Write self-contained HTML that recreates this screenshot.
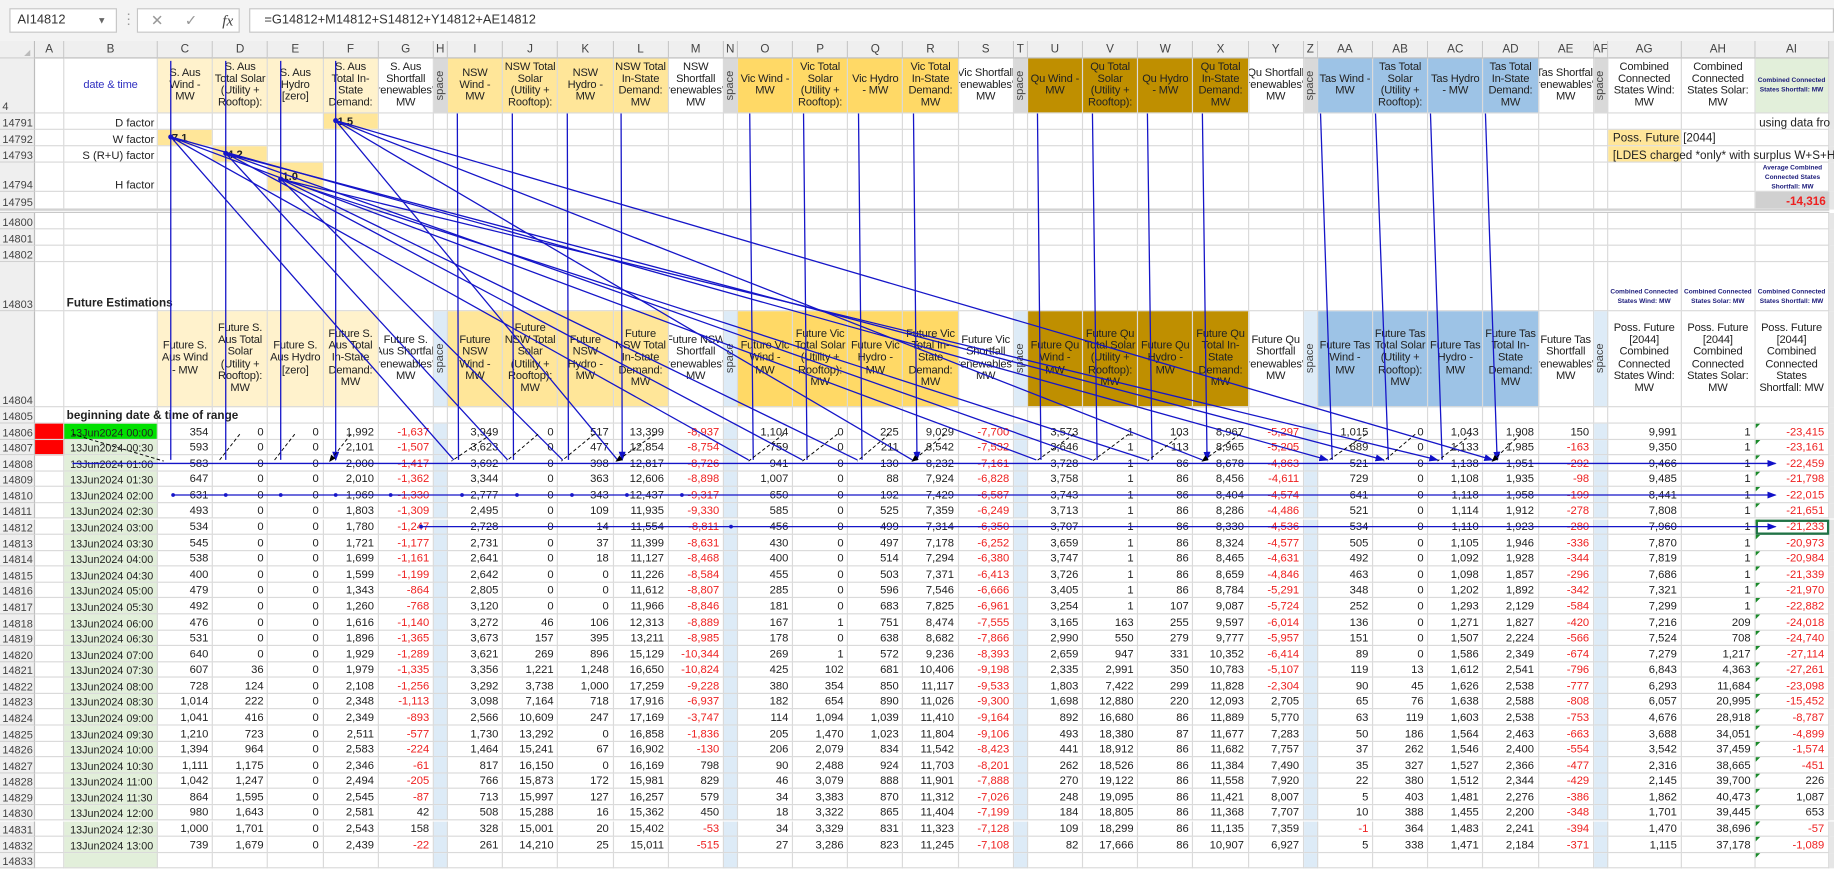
<!DOCTYPE html>
<html><head><meta charset="utf-8">
<style>
html,body{margin:0;padding:0;background:#fff;overflow:hidden;width:1834px;height:859px}
#w{position:absolute;left:0;top:0;width:1568px;height:735px;transform:scale(1.16964,1.1703);transform-origin:0 0;font-family:"Liberation Sans",sans-serif;font-size:9.6px;color:#222;background:#fff}
.top{position:absolute;left:0;top:0;width:1568px;height:35px;background:#f3f3f3}
.box{position:absolute;background:#fff;border:1px solid #c6c6c6;box-sizing:border-box;height:21px;top:7px;font-size:11px;line-height:19px;color:#333}
.r{position:absolute;left:0;width:1568px;display:grid;grid-template-columns:30px 25px 80px repeat(5,47.2px) 12px repeat(5,47.2px) 12px repeat(5,47.2px) 12px repeat(5,47.2px) 12px repeat(5,47.2px) 12px 63px 63px 63px 4px}
.r>*{border-right:1px solid #dadada;border-bottom:1px solid #dadada;box-sizing:border-box;overflow:hidden;white-space:nowrap;font-style:normal;font-weight:normal;display:flex;align-items:flex-end;position:relative;min-width:0}
.r>b{background:#efefef;color:#444;padding-left:2px;border-right:1px solid #bdbdbd;border-bottom:1px solid #d0d0d0;font-size:9.4px}
.r>*:last-child{background:#e6e6e6;border:none}
.ch>*{background:#efefef;justify-content:center;align-items:center;color:#444;font-size:10px;border-right:1px solid #c8c8c8;border-bottom:1px solid #bdbdbd}
.d>i{justify-content:flex-end;padding-right:3px}
.d>i:nth-child(3){background:#e2efda;justify-content:flex-start;padding-left:5px;font-size:9.2px}
.d>i:nth-child(9),.d>i:nth-child(15),.d>i:nth-child(21),.d>i:nth-child(27),.d>i:nth-child(33){background:#ddebf7}
.d>i:nth-child(36)::before{content:"";position:absolute;left:0;top:0;border-top:4px solid #1a8a2a;border-right:4px solid transparent}
.n{color:#ee2020}
.h>i{justify-content:center;align-items:center;text-align:center;white-space:normal;line-height:10.2px;font-size:9.5px;letter-spacing:-0.15px;padding:0 1px}
.y1{background:#fff2cc}.y2{background:#ffe699}.y3{background:#ffd966}.y4{background:#bf8f00}.bl{background:#9dc3e6}.gr{background:#d9d9d9}.lb{background:#ddebf7}.gn{background:#e2efda}
.sp span{transform:rotate(-90deg);display:block;white-space:nowrap;color:#444;letter-spacing:0}
.tiny{font-size:5.6px!important;line-height:8px!important;font-weight:bold!important;color:#1b1b7a;letter-spacing:0!important}
.ov{overflow:visible!important;z-index:2}
.ab{position:absolute;box-sizing:border-box;display:flex;align-items:flex-end;white-space:nowrap;z-index:3}
</style></head><body><div id="w">
<div class="top">
<div class="box" style="left:8px;width:92px;padding-left:6px">AI14812<span style="position:absolute;right:8px;top:0;font-size:8px;color:#666">▼</span></div>
<div style="position:absolute;left:104px;top:9px;color:#999;font-size:12px">⋮</div>
<div class="box" style="left:117px;width:88px;color:#999;font-size:13px"><span style="position:absolute;left:11px">✕</span><span style="position:absolute;left:40px">✓</span><span style="position:absolute;left:72px;font-family:'Liberation Serif',serif;font-style:italic;color:#444">fx</span></div>
<div class="box" style="left:213px;width:1355px;padding-left:12px">=G14812+M14812+S14812+Y14812+AE14812</div>
</div>

<div class="r ch" style="top:35px;height:15px"><b style="justify-content:flex-end;align-items:flex-end;padding-right:3px;color:#bbb;font-size:7px">◢</b><i>A</i><i>B</i><i>C</i><i>D</i><i>E</i><i>F</i><i>G</i><i>H</i><i>I</i><i>J</i><i>K</i><i>L</i><i>M</i><i>N</i><i>O</i><i>P</i><i>Q</i><i>R</i><i>S</i><i>T</i><i>U</i><i>V</i><i>W</i><i>X</i><i>Y</i><i>Z</i><i>AA</i><i>AB</i><i>AC</i><i>AD</i><i>AE</i><i>AF</i><i>AG</i><i>AH</i><i>AI</i><i></i></div>

<div class="r h" style="top:50px;height:47px"><b>4</b><i></i><i style="color:#3030c0">date &amp; time</i><i class=y1>S. Aus Wind - MW</i><i class=y1>S. Aus Total Solar (Utility + Rooftop):</i><i class=y1>S. Aus Hydro [zero]</i><i class=y1>S. Aus Total In-State Demand:</i><i>S. Aus Shortfall 'renewables': MW</i><i class="gr sp"><span>space</span></i><i class=y2>NSW Wind - MW</i><i class=y2>NSW Total Solar (Utility + Rooftop):</i><i class=y2>NSW Hydro - MW</i><i class=y2>NSW Total In-State Demand: MW</i><i>NSW Shortfall 'renewables': MW</i><i class="gr sp"><span>space</span></i><i class=y3>Vic Wind - MW</i><i class=y3>Vic Total Solar (Utility + Rooftop):</i><i class=y3>Vic Hydro - MW</i><i class=y3>Vic Total In-State Demand: MW</i><i>Vic Shortfall 'renewables': MW</i><i class="gr sp"><span>space</span></i><i class=y4>Qu Wind - MW</i><i class=y4>Qu Total Solar (Utility + Rooftop):</i><i class=y4>Qu Hydro - MW</i><i class=y4>Qu Total In-State Demand: MW</i><i>Qu Shortfall 'renewables': MW</i><i class="gr sp"><span>space</span></i><i class=bl>Tas Wind - MW</i><i class=bl>Tas Total Solar (Utility + Rooftop):</i><i class=bl>Tas Hydro - MW</i><i class=bl>Tas Total In-State Demand: MW</i><i>Tas Shortfall 'renewables': MW</i><i class="gr sp"><span>space</span></i><i>Combined Connected States Wind: MW</i><i>Combined Connected States Solar: MW</i><i class="gn tiny">Combined Connected States Shortfall: MW</i><i></i></div>

<div class="r" style="top:97px;height:14px"><b>14791</b><i></i><i></i><i></i><i></i><i></i><i></i><i></i><i></i><i></i><i></i><i></i><i></i><i></i><i></i><i></i><i></i><i></i><i></i><i></i><i></i><i></i><i></i><i></i><i></i><i></i><i></i><i></i><i></i><i></i><i></i><i></i><i></i><i></i><i></i><i></i><i></i></div>
<div class="r" style="top:111px;height:14px"><b>14792</b><i></i><i></i><i></i><i></i><i></i><i></i><i></i><i></i><i></i><i></i><i></i><i></i><i></i><i></i><i></i><i></i><i></i><i></i><i></i><i></i><i></i><i></i><i></i><i></i><i></i><i></i><i></i><i></i><i></i><i></i><i></i><i></i><i></i><i></i><i></i><i></i></div>
<div class="r" style="top:125px;height:14px"><b>14793</b><i></i><i></i><i></i><i></i><i></i><i></i><i></i><i></i><i></i><i></i><i></i><i></i><i></i><i></i><i></i><i></i><i></i><i></i><i></i><i></i><i></i><i></i><i></i><i></i><i></i><i></i><i></i><i></i><i></i><i></i><i></i><i></i><i></i><i></i><i></i><i></i></div>
<div class="r" style="top:139px;height:25px"><b>14794</b><i></i><i></i><i></i><i></i><i></i><i></i><i></i><i></i><i></i><i></i><i></i><i></i><i></i><i></i><i></i><i></i><i></i><i></i><i></i><i></i><i></i><i></i><i></i><i></i><i></i><i></i><i></i><i></i><i></i><i></i><i></i><i></i><i></i><i></i><i></i><i></i></div>
<div class="r" style="top:164px;height:15px"><b>14795</b><i></i><i></i><i></i><i></i><i></i><i></i><i></i><i></i><i></i><i></i><i></i><i></i><i></i><i></i><i></i><i></i><i></i><i></i><i></i><i></i><i></i><i></i><i></i><i></i><i></i><i></i><i></i><i></i><i></i><i></i><i></i><i></i><i></i><i></i><i></i><i></i></div>

<!-- overlays for rows 14791-14795 -->
<div class="ab" style="left:55px;top:97px;width:80px;height:14px;justify-content:flex-end;padding-right:3px">D factor</div>
<div class="ab" style="left:55px;top:111px;width:80px;height:14px;justify-content:flex-end;padding-right:3px">W factor</div>
<div class="ab" style="left:55px;top:125px;width:80px;height:14px;justify-content:flex-end;padding-right:3px">S (R+U) factor</div>
<div class="ab" style="left:55px;top:139px;width:80px;height:25px;justify-content:flex-end;padding-right:3px">H factor</div>
<div class="ab y2" style="left:276.6px;top:97px;width:46.2px;height:13px;font-weight:bold;padding-left:12px;z-index:1">1.5</div>
<div class="ab y2" style="left:135px;top:111px;width:46.2px;height:13px;font-weight:bold;padding-left:12px;z-index:1">7.1</div>
<div class="ab y2" style="left:182.2px;top:125px;width:46.2px;height:13px;font-weight:bold;padding-left:12px;z-index:1">4.2</div>
<div class="ab y2" style="left:229.4px;top:139px;width:46.2px;height:24px;font-weight:bold;padding-left:12px;align-items:center;z-index:1">1.0</div>
<div class="ab" style="left:1501px;top:97px;height:14px;padding-left:3px;font-size:10px">using data fro</div>
<div class="ab y2" style="left:1375px;top:111px;width:62px;height:13px;padding-left:4px;font-size:10px;overflow:visible"><span style="background:transparent">Poss. Future</span><span style="position:absolute;left:62px;bottom:0;padding-left:2px;white-space:nowrap">[2044]</span></div>
<div class="ab" style="left:1375px;top:125px;width:62px;height:13px;background:#ffe699;z-index:1"></div>
<div class="ab" style="left:1375px;top:125px;height:14px;padding-left:4px;font-size:10px;z-index:4">[LDES charged *only* with surplus W+S+H</div>
<div class="ab tiny" style="left:1501px;top:139px;width:63px;height:25px;justify-content:center;text-align:center;white-space:normal;align-items:center">Average Combined Connected States Shortfall: MW</div>
<div class="ab" style="left:1501px;top:164px;width:63px;height:14px;background:#d0d0d0;color:#ee2020;font-weight:bold;justify-content:flex-end;padding-right:3px;font-size:10px">-14,316</div>

<div style="position:absolute;left:0;top:179px;width:1564px;height:3px;border-top:1px solid #c8c8c8;border-bottom:1px solid #c8c8c8;box-sizing:border-box"></div>
<div class="r" style="top:182px;height:14px"><b>14800</b><i></i><i></i><i></i><i></i><i></i><i></i><i></i><i></i><i></i><i></i><i></i><i></i><i></i><i></i><i></i><i></i><i></i><i></i><i></i><i></i><i></i><i></i><i></i><i></i><i></i><i></i><i></i><i></i><i></i><i></i><i></i><i></i><i></i><i></i><i></i><i></i></div>
<div class="r" style="top:196px;height:14px"><b>14801</b><i></i><i></i><i></i><i></i><i></i><i></i><i></i><i></i><i></i><i></i><i></i><i></i><i></i><i></i><i></i><i></i><i></i><i></i><i></i><i></i><i></i><i></i><i></i><i></i><i></i><i></i><i></i><i></i><i></i><i></i><i></i><i></i><i></i><i></i><i></i><i></i></div>
<div class="r" style="top:210px;height:14px"><b>14802</b><i></i><i></i><i></i><i></i><i></i><i></i><i></i><i></i><i></i><i></i><i></i><i></i><i></i><i></i><i></i><i></i><i></i><i></i><i></i><i></i><i></i><i></i><i></i><i></i><i></i><i></i><i></i><i></i><i></i><i></i><i></i><i></i><i></i><i></i><i></i><i></i></div>
<div class="r" style="top:224px;height:42px"><b>14803</b><i></i><i class=ov style="font-weight:bold;padding-left:2px;font-size:10px">Future Estimations</i><i></i><i></i><i></i><i></i><i></i><i></i><i></i><i></i><i></i><i></i><i></i><i></i><i></i><i></i><i></i><i></i><i></i><i></i><i></i><i></i><i></i><i></i><i></i><i></i><i></i><i></i><i></i><i></i><i></i><i></i><i class=tiny style="justify-content:center;text-align:center;white-space:normal;padding-bottom:3px">Combined Connected States Wind: MW</i><i class=tiny style="justify-content:center;text-align:center;white-space:normal;padding-bottom:3px">Combined Connected States Solar: MW</i><i class=tiny style="justify-content:center;text-align:center;white-space:normal;padding-bottom:3px">Combined Connected States Shortfall: MW</i><i></i></div>

<div class="r h" style="top:266px;height:82px"><b>14804</b><i></i><i></i><i class=y1>Future S. Aus Wind - MW</i><i class=y1>Future S. Aus Total Solar (Utility + Rooftop): MW</i><i class=y1>Future S. Aus Hydro [zero]</i><i class=y1>Future S. Aus Total In-State Demand: MW</i><i>Future S. Aus Shortfall 'renewables': MW</i><i class="lb sp"><span>space</span></i><i class=y2>Future NSW Wind - MW</i><i class=y2>Future NSW Total Solar (Utility + Rooftop): MW</i><i class=y2>Future NSW Hydro - MW</i><i class=y2>Future NSW Total In-State Demand: MW</i><i>Future NSW Shortfall 'renewables': MW</i><i class="lb sp"><span>space</span></i><i class=y3>Future Vic Wind - MW</i><i class=y3>Future Vic Total Solar (Utility + Rooftop): MW</i><i class=y3>Future Vic Hydro - MW</i><i class=y3>Future Vic Total In-State Demand: MW</i><i>Future Vic Shortfall 'renewables': MW</i><i class="lb sp"><span>space</span></i><i class=y4>Future Qu Wind - MW</i><i class=y4>Future Qu Total Solar (Utility + Rooftop): MW</i><i class=y4>Future Qu Hydro - MW</i><i class=y4>Future Qu Total In-State Demand: MW</i><i>Future Qu Shortfall 'renewables': MW</i><i class="lb sp"><span>space</span></i><i class=bl>Future Tas Wind - MW</i><i class=bl>Future Tas Total Solar (Utility + Rooftop): MW</i><i class=bl>Future Tas Hydro - MW</i><i class=bl>Future Tas Total In-State Demand: MW</i><i>Future Tas Shortfall 'renewables': MW</i><i class="lb sp"><span>space</span></i><i>Poss. Future [2044] Combined Connected States Wind: MW</i><i>Poss. Future [2044] Combined Connected States Solar: MW</i><i>Poss. Future [2044] Combined Connected States Shortfall: MW</i><i></i></div>
<div class="r" style="top:348px;height:14px"><b>14805</b><i></i><i class=ov style="font-weight:bold;padding-left:2px;font-size:10px">beginning date &amp; time of range</i><i></i><i></i><i></i><i></i><i></i><i></i><i></i><i></i><i></i><i></i><i></i><i></i><i></i><i></i><i></i><i></i><i></i><i></i><i></i><i></i><i></i><i></i><i></i><i></i><i></i><i></i><i></i><i></i><i></i><i></i><i></i><i></i><i></i><i></i></div>

<div class="r d" style="top:362px;height:13.6px"><b>14806</b><i style="background:#f00"></i><i style="background:#00e000">13Jun2024 00:00</i><i>354</i><i>0</i><i>0</i><i>1,992</i><i class=n>-1,637</i><i></i><i>3,949</i><i>0</i><i>517</i><i>13,399</i><i class=n>-8,937</i><i></i><i>1,104</i><i>0</i><i>225</i><i>9,029</i><i class=n>-7,700</i><i></i><i>3,573</i><i>1</i><i>103</i><i>8,967</i><i class=n>-5,297</i><i></i><i>1,015</i><i>0</i><i>1,043</i><i>1,908</i><i>150</i><i></i><i>9,991</i><i>1</i><i class=n>-23,415</i><i></i></div>
<div class="r d" style="top:375.6px;height:13.6px"><b>14807</b><i style="background:#f00"></i><i>13Jun2024 00:30</i><i>593</i><i>0</i><i>0</i><i>2,101</i><i class=n>-1,507</i><i></i><i>3,623</i><i>0</i><i>477</i><i>12,854</i><i class=n>-8,754</i><i></i><i>759</i><i>0</i><i>211</i><i>8,542</i><i class=n>-7,532</i><i></i><i>3,646</i><i>1</i><i>113</i><i>8,965</i><i class=n>-5,205</i><i></i><i>689</i><i>0</i><i>1,133</i><i>1,985</i><i class=n>-163</i><i></i><i>9,350</i><i>1</i><i class=n>-23,161</i><i></i></div>
<div class="r d" style="top:389.2px;height:13.6px"><b>14808</b><i></i><i>13Jun2024 01:00</i><i>583</i><i>0</i><i>0</i><i>2,000</i><i class=n>-1,417</i><i></i><i>3,692</i><i>0</i><i>398</i><i>12,817</i><i class=n>-8,726</i><i></i><i>941</i><i>0</i><i>130</i><i>8,232</i><i class=n>-7,161</i><i></i><i>3,728</i><i>1</i><i>86</i><i>8,678</i><i class=n>-4,863</i><i></i><i>521</i><i>0</i><i>1,138</i><i>1,951</i><i class=n>-292</i><i></i><i>9,466</i><i>1</i><i class=n>-22,459</i><i></i></div>
<div class="r d" style="top:402.7px;height:13.6px"><b>14809</b><i></i><i>13Jun2024 01:30</i><i>647</i><i>0</i><i>0</i><i>2,010</i><i class=n>-1,362</i><i></i><i>3,344</i><i>0</i><i>363</i><i>12,606</i><i class=n>-8,898</i><i></i><i>1,007</i><i>0</i><i>88</i><i>7,924</i><i class=n>-6,828</i><i></i><i>3,758</i><i>1</i><i>86</i><i>8,456</i><i class=n>-4,611</i><i></i><i>729</i><i>0</i><i>1,108</i><i>1,935</i><i class=n>-98</i><i></i><i>9,485</i><i>1</i><i class=n>-21,798</i><i></i></div>
<div class="r d" style="top:416.3px;height:13.6px"><b>14810</b><i></i><i>13Jun2024 02:00</i><i>631</i><i>0</i><i>0</i><i>1,969</i><i class=n>-1,330</i><i></i><i>2,777</i><i>0</i><i>343</i><i>12,437</i><i class=n>-9,317</i><i></i><i>650</i><i>0</i><i>192</i><i>7,429</i><i class=n>-6,587</i><i></i><i>3,743</i><i>1</i><i>86</i><i>8,404</i><i class=n>-4,574</i><i></i><i>641</i><i>0</i><i>1,118</i><i>1,958</i><i class=n>-199</i><i></i><i>8,441</i><i>1</i><i class=n>-22,015</i><i></i></div>
<div class="r d" style="top:429.9px;height:13.6px"><b>14811</b><i></i><i>13Jun2024 02:30</i><i>493</i><i>0</i><i>0</i><i>1,803</i><i class=n>-1,309</i><i></i><i>2,495</i><i>0</i><i>109</i><i>11,935</i><i class=n>-9,330</i><i></i><i>585</i><i>0</i><i>525</i><i>7,359</i><i class=n>-6,249</i><i></i><i>3,713</i><i>1</i><i>86</i><i>8,286</i><i class=n>-4,486</i><i></i><i>521</i><i>0</i><i>1,114</i><i>1,912</i><i class=n>-278</i><i></i><i>7,808</i><i>1</i><i class=n>-21,651</i><i></i></div>
<div class="r d" style="top:443.5px;height:13.6px"><b>14812</b><i></i><i>13Jun2024 03:00</i><i>534</i><i>0</i><i>0</i><i>1,780</i><i class=n>-1,247</i><i></i><i>2,728</i><i>0</i><i>14</i><i>11,554</i><i class=n>-8,811</i><i></i><i>456</i><i>0</i><i>499</i><i>7,314</i><i class=n>-6,350</i><i></i><i>3,707</i><i>1</i><i>86</i><i>8,330</i><i class=n>-4,536</i><i></i><i>534</i><i>0</i><i>1,110</i><i>1,923</i><i class=n>-280</i><i></i><i>7,960</i><i>1</i><i class=n style="outline:2px solid #217346;outline-offset:-2px">-21,233</i><i></i></div>
<div class="r d" style="top:457.1px;height:13.6px"><b>14813</b><i></i><i>13Jun2024 03:30</i><i>545</i><i>0</i><i>0</i><i>1,721</i><i class=n>-1,177</i><i></i><i>2,731</i><i>0</i><i>37</i><i>11,399</i><i class=n>-8,631</i><i></i><i>430</i><i>0</i><i>497</i><i>7,178</i><i class=n>-6,252</i><i></i><i>3,659</i><i>1</i><i>86</i><i>8,324</i><i class=n>-4,577</i><i></i><i>505</i><i>0</i><i>1,105</i><i>1,946</i><i class=n>-336</i><i></i><i>7,870</i><i>1</i><i class=n>-20,973</i><i></i></div>
<div class="r d" style="top:470.6px;height:13.6px"><b>14814</b><i></i><i>13Jun2024 04:00</i><i>538</i><i>0</i><i>0</i><i>1,699</i><i class=n>-1,161</i><i></i><i>2,641</i><i>0</i><i>18</i><i>11,127</i><i class=n>-8,468</i><i></i><i>400</i><i>0</i><i>514</i><i>7,294</i><i class=n>-6,380</i><i></i><i>3,747</i><i>1</i><i>86</i><i>8,465</i><i class=n>-4,631</i><i></i><i>492</i><i>0</i><i>1,092</i><i>1,928</i><i class=n>-344</i><i></i><i>7,819</i><i>1</i><i class=n>-20,984</i><i></i></div>
<div class="r d" style="top:484.2px;height:13.6px"><b>14815</b><i></i><i>13Jun2024 04:30</i><i>400</i><i>0</i><i>0</i><i>1,599</i><i class=n>-1,199</i><i></i><i>2,642</i><i>0</i><i>0</i><i>11,226</i><i class=n>-8,584</i><i></i><i>455</i><i>0</i><i>503</i><i>7,371</i><i class=n>-6,413</i><i></i><i>3,726</i><i>1</i><i>86</i><i>8,659</i><i class=n>-4,846</i><i></i><i>463</i><i>0</i><i>1,098</i><i>1,857</i><i class=n>-296</i><i></i><i>7,686</i><i>1</i><i class=n>-21,339</i><i></i></div>
<div class="r d" style="top:497.8px;height:13.6px"><b>14816</b><i></i><i>13Jun2024 05:00</i><i>479</i><i>0</i><i>0</i><i>1,343</i><i class=n>-864</i><i></i><i>2,805</i><i>0</i><i>0</i><i>11,612</i><i class=n>-8,807</i><i></i><i>285</i><i>0</i><i>596</i><i>7,546</i><i class=n>-6,666</i><i></i><i>3,405</i><i>1</i><i>86</i><i>8,784</i><i class=n>-5,291</i><i></i><i>348</i><i>0</i><i>1,202</i><i>1,892</i><i class=n>-342</i><i></i><i>7,321</i><i>1</i><i class=n>-21,970</i><i></i></div>
<div class="r d" style="top:511.4px;height:13.6px"><b>14817</b><i></i><i>13Jun2024 05:30</i><i>492</i><i>0</i><i>0</i><i>1,260</i><i class=n>-768</i><i></i><i>3,120</i><i>0</i><i>0</i><i>11,966</i><i class=n>-8,846</i><i></i><i>181</i><i>0</i><i>683</i><i>7,825</i><i class=n>-6,961</i><i></i><i>3,254</i><i>1</i><i>107</i><i>9,087</i><i class=n>-5,724</i><i></i><i>252</i><i>0</i><i>1,293</i><i>2,129</i><i class=n>-584</i><i></i><i>7,299</i><i>1</i><i class=n>-22,882</i><i></i></div>
<div class="r d" style="top:525px;height:13.6px"><b>14818</b><i></i><i>13Jun2024 06:00</i><i>476</i><i>0</i><i>0</i><i>1,616</i><i class=n>-1,140</i><i></i><i>3,272</i><i>46</i><i>106</i><i>12,313</i><i class=n>-8,889</i><i></i><i>167</i><i>1</i><i>751</i><i>8,474</i><i class=n>-7,555</i><i></i><i>3,165</i><i>163</i><i>255</i><i>9,597</i><i class=n>-6,014</i><i></i><i>136</i><i>0</i><i>1,271</i><i>1,827</i><i class=n>-420</i><i></i><i>7,216</i><i>209</i><i class=n>-24,018</i><i></i></div>
<div class="r d" style="top:538.5px;height:13.6px"><b>14819</b><i></i><i>13Jun2024 06:30</i><i>531</i><i>0</i><i>0</i><i>1,896</i><i class=n>-1,365</i><i></i><i>3,673</i><i>157</i><i>395</i><i>13,211</i><i class=n>-8,985</i><i></i><i>178</i><i>0</i><i>638</i><i>8,682</i><i class=n>-7,866</i><i></i><i>2,990</i><i>550</i><i>279</i><i>9,777</i><i class=n>-5,957</i><i></i><i>151</i><i>0</i><i>1,507</i><i>2,224</i><i class=n>-566</i><i></i><i>7,524</i><i>708</i><i class=n>-24,740</i><i></i></div>
<div class="r d" style="top:552.1px;height:13.6px"><b>14820</b><i></i><i>13Jun2024 07:00</i><i>640</i><i>0</i><i>0</i><i>1,929</i><i class=n>-1,289</i><i></i><i>3,621</i><i>269</i><i>896</i><i>15,129</i><i class=n>-10,344</i><i></i><i>269</i><i>1</i><i>572</i><i>9,236</i><i class=n>-8,393</i><i></i><i>2,659</i><i>947</i><i>331</i><i>10,352</i><i class=n>-6,414</i><i></i><i>89</i><i>0</i><i>1,586</i><i>2,349</i><i class=n>-674</i><i></i><i>7,279</i><i>1,217</i><i class=n>-27,114</i><i></i></div>
<div class="r d" style="top:565.7px;height:13.6px"><b>14821</b><i></i><i>13Jun2024 07:30</i><i>607</i><i>36</i><i>0</i><i>1,979</i><i class=n>-1,335</i><i></i><i>3,356</i><i>1,221</i><i>1,248</i><i>16,650</i><i class=n>-10,824</i><i></i><i>425</i><i>102</i><i>681</i><i>10,406</i><i class=n>-9,198</i><i></i><i>2,335</i><i>2,991</i><i>350</i><i>10,783</i><i class=n>-5,107</i><i></i><i>119</i><i>13</i><i>1,612</i><i>2,541</i><i class=n>-796</i><i></i><i>6,843</i><i>4,363</i><i class=n>-27,261</i><i></i></div>
<div class="r d" style="top:579.3px;height:13.6px"><b>14822</b><i></i><i>13Jun2024 08:00</i><i>728</i><i>124</i><i>0</i><i>2,108</i><i class=n>-1,256</i><i></i><i>3,292</i><i>3,738</i><i>1,000</i><i>17,259</i><i class=n>-9,228</i><i></i><i>380</i><i>354</i><i>850</i><i>11,117</i><i class=n>-9,533</i><i></i><i>1,803</i><i>7,422</i><i>299</i><i>11,828</i><i class=n>-2,304</i><i></i><i>90</i><i>45</i><i>1,626</i><i>2,538</i><i class=n>-777</i><i></i><i>6,293</i><i>11,684</i><i class=n>-23,098</i><i></i></div>
<div class="r d" style="top:592.9px;height:13.6px"><b>14823</b><i></i><i>13Jun2024 08:30</i><i>1,014</i><i>222</i><i>0</i><i>2,348</i><i class=n>-1,113</i><i></i><i>3,098</i><i>7,164</i><i>718</i><i>17,916</i><i class=n>-6,937</i><i></i><i>182</i><i>654</i><i>890</i><i>11,026</i><i class=n>-9,300</i><i></i><i>1,698</i><i>12,880</i><i>220</i><i>12,093</i><i>2,705</i><i></i><i>65</i><i>76</i><i>1,638</i><i>2,588</i><i class=n>-808</i><i></i><i>6,057</i><i>20,995</i><i class=n>-15,452</i><i></i></div>
<div class="r d" style="top:606.4px;height:13.6px"><b>14824</b><i></i><i>13Jun2024 09:00</i><i>1,041</i><i>416</i><i>0</i><i>2,349</i><i class=n>-893</i><i></i><i>2,566</i><i>10,609</i><i>247</i><i>17,169</i><i class=n>-3,747</i><i></i><i>114</i><i>1,094</i><i>1,039</i><i>11,410</i><i class=n>-9,164</i><i></i><i>892</i><i>16,680</i><i>86</i><i>11,889</i><i>5,770</i><i></i><i>63</i><i>119</i><i>1,603</i><i>2,538</i><i class=n>-753</i><i></i><i>4,676</i><i>28,918</i><i class=n>-8,787</i><i></i></div>
<div class="r d" style="top:620px;height:13.6px"><b>14825</b><i></i><i>13Jun2024 09:30</i><i>1,210</i><i>723</i><i>0</i><i>2,511</i><i class=n>-577</i><i></i><i>1,730</i><i>13,292</i><i>0</i><i>16,858</i><i class=n>-1,836</i><i></i><i>205</i><i>1,470</i><i>1,023</i><i>11,804</i><i class=n>-9,106</i><i></i><i>493</i><i>18,380</i><i>87</i><i>11,677</i><i>7,283</i><i></i><i>50</i><i>186</i><i>1,564</i><i>2,463</i><i class=n>-663</i><i></i><i>3,688</i><i>34,051</i><i class=n>-4,899</i><i></i></div>
<div class="r d" style="top:633.6px;height:13.6px"><b>14826</b><i></i><i>13Jun2024 10:00</i><i>1,394</i><i>964</i><i>0</i><i>2,583</i><i class=n>-224</i><i></i><i>1,464</i><i>15,241</i><i>67</i><i>16,902</i><i class=n>-130</i><i></i><i>206</i><i>2,079</i><i>834</i><i>11,542</i><i class=n>-8,423</i><i></i><i>441</i><i>18,912</i><i>86</i><i>11,682</i><i>7,757</i><i></i><i>37</i><i>262</i><i>1,546</i><i>2,400</i><i class=n>-554</i><i></i><i>3,542</i><i>37,459</i><i class=n>-1,574</i><i></i></div>
<div class="r d" style="top:647.2px;height:13.6px"><b>14827</b><i></i><i>13Jun2024 10:30</i><i>1,111</i><i>1,175</i><i>0</i><i>2,346</i><i class=n>-61</i><i></i><i>817</i><i>16,150</i><i>0</i><i>16,169</i><i>798</i><i></i><i>90</i><i>2,488</i><i>924</i><i>11,703</i><i class=n>-8,201</i><i></i><i>262</i><i>18,526</i><i>86</i><i>11,384</i><i>7,490</i><i></i><i>35</i><i>327</i><i>1,527</i><i>2,366</i><i class=n>-477</i><i></i><i>2,316</i><i>38,665</i><i class=n>-451</i><i></i></div>
<div class="r d" style="top:660.8px;height:13.6px"><b>14828</b><i></i><i>13Jun2024 11:00</i><i>1,042</i><i>1,247</i><i>0</i><i>2,494</i><i class=n>-205</i><i></i><i>766</i><i>15,873</i><i>172</i><i>15,981</i><i>829</i><i></i><i>46</i><i>3,079</i><i>888</i><i>11,901</i><i class=n>-7,888</i><i></i><i>270</i><i>19,122</i><i>86</i><i>11,558</i><i>7,920</i><i></i><i>22</i><i>380</i><i>1,512</i><i>2,344</i><i class=n>-429</i><i></i><i>2,145</i><i>39,700</i><i>226</i><i></i></div>
<div class="r d" style="top:674.3px;height:13.6px"><b>14829</b><i></i><i>13Jun2024 11:30</i><i>864</i><i>1,595</i><i>0</i><i>2,545</i><i class=n>-87</i><i></i><i>713</i><i>15,997</i><i>127</i><i>16,257</i><i>579</i><i></i><i>34</i><i>3,383</i><i>870</i><i>11,312</i><i class=n>-7,026</i><i></i><i>248</i><i>19,095</i><i>86</i><i>11,421</i><i>8,007</i><i></i><i>5</i><i>403</i><i>1,481</i><i>2,276</i><i class=n>-386</i><i></i><i>1,862</i><i>40,473</i><i>1,087</i><i></i></div>
<div class="r d" style="top:687.9px;height:13.6px"><b>14830</b><i></i><i>13Jun2024 12:00</i><i>980</i><i>1,643</i><i>0</i><i>2,581</i><i>42</i><i></i><i>508</i><i>15,288</i><i>16</i><i>15,362</i><i>450</i><i></i><i>18</i><i>3,322</i><i>865</i><i>11,404</i><i class=n>-7,199</i><i></i><i>184</i><i>18,805</i><i>86</i><i>11,368</i><i>7,707</i><i></i><i>10</i><i>388</i><i>1,455</i><i>2,200</i><i class=n>-348</i><i></i><i>1,701</i><i>39,445</i><i>653</i><i></i></div>
<div class="r d" style="top:701.5px;height:13.6px"><b>14831</b><i></i><i>13Jun2024 12:30</i><i>1,000</i><i>1,701</i><i>0</i><i>2,543</i><i>158</i><i></i><i>328</i><i>15,001</i><i>20</i><i>15,402</i><i class=n>-53</i><i></i><i>34</i><i>3,329</i><i>831</i><i>11,323</i><i class=n>-7,128</i><i></i><i>109</i><i>18,299</i><i>86</i><i>11,135</i><i>7,359</i><i></i><i class=n>-1</i><i>364</i><i>1,483</i><i>2,241</i><i class=n>-394</i><i></i><i>1,470</i><i>38,696</i><i class=n>-57</i><i></i></div>
<div class="r d" style="top:715.1px;height:13.6px"><b>14832</b><i></i><i>13Jun2024 13:00</i><i>739</i><i>1,679</i><i>0</i><i>2,439</i><i class=n>-22</i><i></i><i>261</i><i>14,210</i><i>25</i><i>15,011</i><i class=n>-515</i><i></i><i>27</i><i>3,286</i><i>823</i><i>11,245</i><i class=n>-7,108</i><i></i><i>82</i><i>17,666</i><i>86</i><i>10,907</i><i>6,927</i><i></i><i>5</i><i>338</i><i>1,471</i><i>2,184</i><i class=n>-371</i><i></i><i>1,115</i><i>37,178</i><i class=n>-1,089</i><i></i></div>
<div class="r d" style="top:728.7px;height:13.6px"><b>14833</b><i></i><i></i><i></i><i></i><i></i><i></i><i></i><i></i><i></i><i></i><i></i><i></i><i></i><i></i><i></i><i></i><i></i><i></i><i></i><i></i><i></i><i></i><i></i><i></i><i></i><i></i><i></i><i></i><i></i><i></i><i></i><i></i><i></i><i></i><i></i><i></i></div>

<svg style="position:absolute;left:0;top:0;z-index:5" width="1568" height="735" viewBox="0 0 1568 735">
<defs><marker id="ar" markerWidth="8" markerHeight="6" refX="7" refY="3" orient="auto" markerUnits="userSpaceOnUse"><path d="M0,0 L8,3 L0,6 z" fill="#1010c8"/></marker>
<marker id="ak" markerWidth="6" markerHeight="5" refX="5" refY="2.5" orient="auto" markerUnits="userSpaceOnUse"><path d="M0,0 L6,2.5 L0,5 z" fill="#000"/></marker></defs>
<g stroke="#1515c8" stroke-width="1.1" fill="none" marker-end="url(#ar)">
<path d="M146,52V393M193,52V393M240,52V393M287,52V393"/>
<path d="M391,97L392,393M438,97L439,393M485,97L486,393M531,97L532,393"/>
<path d="M641,97L644,393M687,97L690,393M734,97L737,393M781,97L784,393"/>
<path d="M887,97L890,393M934,97L938,393M981,97L985,393M1028,97L1032,393"/>
<path d="M1129,97L1139,393M1176,97L1187,393M1223,97L1233,393M1270,97L1280,393"/>
<path d="M146,117L388,393M146,117L640,393M146,117L886,393M146,117L1135,393"/>
<path d="M193,131L434,393M193,131L686,393M193,131L934,393M193,131L1183,393"/>
<path d="M240,153L481,393M240,153L733,393M240,153L981,393M240,153L1229,393"/>
<path d="M287,103L528,393M287,103L780,393M287,103L1028,393M287,103L1276,393"/>
<path d="M62,396H1518"/><path d="M148,423H1518"/><path d="M360,450H1518"/>
</g>
<g fill="#1515c8"><circle cx="146" cy="117" r="2.2"/><circle cx="193" cy="131" r="2.2"/><circle cx="240" cy="153" r="2.2"/><circle cx="287" cy="103" r="2.2"/>
<circle cx="148" cy="423" r="1.6"/><circle cx="193" cy="423" r="1.6"/><circle cx="240" cy="423" r="1.6"/><circle cx="287" cy="423" r="1.6"/><circle cx="334" cy="423" r="1.6"/><circle cx="395" cy="423" r="1.6"/><circle cx="442" cy="423" r="1.6"/><circle cx="489" cy="423" r="1.6"/><circle cx="536" cy="423" r="1.6"/><circle cx="583" cy="423" r="1.6"/><circle cx="360" cy="450" r="1.6"/><circle cx="625" cy="450" r="1.6"/></g>
<g stroke="#000" stroke-width="0.8" stroke-dasharray="3,2" fill="none" marker-end="url(#ak)">
<path d="M62,371L140,394M205,371L187,394M252,371L234,394M300,371L282,394"/>
<path d="M420,371L386,394M460,371L433,394M508,371L480,394M560,371L527,394"/>
<path d="M670,371L640,394M716,371L686,394M760,371L733,394M808,371L780,394"/>
<path d="M918,371L886,394M965,371L934,394M1010,371L981,394M1060,371L1028,394"/>
<path d="M1168,371L1135,394M1210,371L1183,394M1258,371L1229,394M1300,371L1276,394"/>
</g>
</svg>
</div></body></html>
